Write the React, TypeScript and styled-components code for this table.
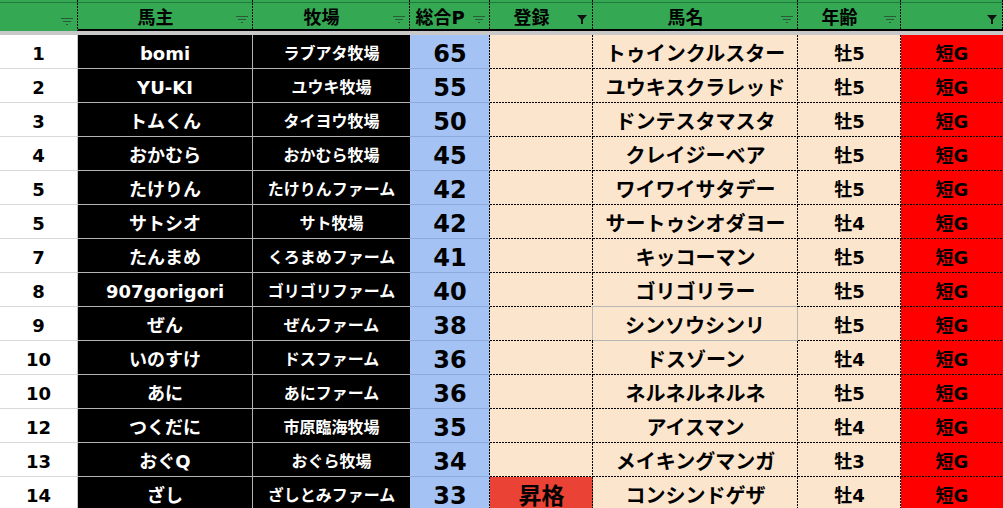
import styled, { createGlobalStyle, css } from 'styled-components'

const GlobalStyle = createGlobalStyle`
  html, body {
    margin: 0;
    padding: 0;
    background: #ffffff;
    overflow: hidden;
  }
`

type Kind = 'num' | 'owner' | 'farm' | 'point' | 'entry' | 'horse' | 'age' | 'grade'

const COLS = '78px 175px 157px 80px 103px 205px 103px 102px'

// Excel-style dotted cell lines, drawn as background layers so they read darker than css "dotted"
const DOT_X = 'linear-gradient(to right, #000 2px, transparent 2px)'
const DOT_Y = 'linear-gradient(#000 2px, transparent 2px)'

const dotted = (bottom: boolean, right: boolean) => {
  const img: string[] = []
  const size: string[] = []
  const pos: string[] = []
  const rep: string[] = []
  if (bottom) {
    img.push(DOT_X)
    size.push('3px 1px')
    pos.push('left bottom')
    rep.push('repeat-x')
  }
  if (right) {
    img.push(DOT_Y)
    size.push('1px 3px')
    pos.push('right top')
    rep.push('repeat-y')
  }
  return css`
    background-image: ${img.join(', ')};
    background-size: ${size.join(', ')};
    background-position: ${pos.join(', ')};
    background-repeat: ${rep.join(', ')};
  `
}

const Sheet = styled.div`
  display: grid;
  grid-template-columns: ${COLS};
  grid-template-rows: 31px 4px;
  grid-auto-rows: 34px;
  width: 1003px;
  font-family: "DejaVu Sans", "Noto Sans CJK JP", sans-serif;
  font-weight: 700;
`

const HeadCell = styled.div<{ $first?: boolean }>`
  position: relative;
  box-sizing: border-box;
  display: flex;
  align-items: center;
  justify-content: center;
  padding: 2px 20px 0 0;
  font-size: 18px;
  color: #000;
  background:
    ${DOT_Y} right top / 1px 3px repeat-y,
    linear-gradient(#34a853 0 2px, #1f7b3b 2px 3px, #34a853 3px);
  border-bottom: ${(p) => (p.$first ? 'none' : '2px solid #000')};
`

const Freeze = styled.div`
  grid-column: 1 / -1;
  background: #c8c8c8;
`

const Row = styled.div`
  display: contents;
`

const IconSlot = styled.span`
  position: absolute;
  right: 4px;
  bottom: 4px;
  width: 14px;
  height: 12px;
  display: flex;
`

const cellLook: Record<Kind, ReturnType<typeof css>> = {
  num: css`
    background-color: #fff;
    color: #000;
    font-size: 18px;
    border-right: 1px solid #c4c4c4;
    border-bottom: 1px solid #d9d9d9;
  `,
  owner: css`
    background-color: #000;
    color: #fff;
    font-size: 18px;
    border-right: 1px solid #b3b3b3;
    border-bottom: 1px solid #b3b3b3;
  `,
  farm: css`
    background-color: #000;
    color: #fff;
    font-size: 16px;
    border-bottom: 1px solid #b3b3b3;
  `,
  point: css`
    background-color: #a4c2f4;
    color: #000;
    font-size: 24px;
    border-bottom: 1px solid #8eaadb;
    ${dotted(false, true)}
  `,
  entry: css`
    background-color: #fce5cd;
    color: #000;
    font-size: 23px;
    ${dotted(true, true)}
  `,
  horse: css`
    background-color: #fce5cd;
    color: #000;
    font-size: 20px;
    font-weight: 600;
    ${dotted(true, true)}
  `,
  age: css`
    background-color: #fce5cd;
    color: #000;
    font-size: 18px;
    ${dotted(true, true)}
  `,
  grade: css`
    background-color: #ff0000;
    color: #000;
    font-size: 18px;
    ${dotted(true, false)}
  `,
}

const Cell = styled.div<{ $kind: Kind; $promoted?: boolean; $plain?: boolean }>`
  box-sizing: border-box;
  display: flex;
  align-items: center;
  justify-content: center;
  padding-top: 4px;
  line-height: 1;
  white-space: nowrap;
  overflow: hidden;
  ${(p) => cellLook[p.$kind]}
  ${(p) =>
    p.$promoted &&
    css`
      background-color: #ea4335;
    `}
  ${(p) =>
    p.$plain &&
    css`
      background-image: none;
      border-right: 1px solid #b7b7b7;
      border-bottom: 1px solid #b7b7b7;
      box-shadow: -1px -1px 0 0 #b7b7b7;
    `}
`

const FilterButton = () => (
  <svg width="14" height="12" viewBox="0 0 14 12">
    <rect x="1" y="3" width="12" height="1" fill="#2a5a37" />
    <rect x="3" y="6" width="8" height="1" fill="#2a5a37" />
    <rect x="6" y="9" width="2" height="1" fill="#2a5a37" />
  </svg>
)

const FunnelIcon = () => (
  <svg width="14" height="12" viewBox="0 0 14 12">
    <path d="M2 2 H12 L8 6.5 V11 H6 V6.5 Z" fill="#111" />
  </svg>
)

type Entry = {
  rank: string
  owner: string
  farm: string
  point: number
  entry?: string
  horse: string
  age: string
  plain?: boolean
}

const rows: Entry[] = [
  { rank: '1', owner: 'bomi', farm: 'ラブアタ牧場', point: 65, horse: 'トゥインクルスター', age: '牡5' },
  { rank: '2', owner: 'YU-KI', farm: 'ユウキ牧場', point: 55, horse: 'ユウキスクラレッド', age: '牡5' },
  { rank: '3', owner: 'トムくん', farm: 'タイヨウ牧場', point: 50, horse: 'ドンテスタマスタ', age: '牡5' },
  { rank: '4', owner: 'おかむら', farm: 'おかむら牧場', point: 45, horse: 'クレイジーベア', age: '牡5' },
  { rank: '5', owner: 'たけりん', farm: 'たけりんファーム', point: 42, horse: 'ワイワイサタデー', age: '牡5' },
  { rank: '5', owner: 'サトシオ', farm: 'サト牧場', point: 42, horse: 'サートゥシオダヨー', age: '牡4' },
  { rank: '7', owner: 'たんまめ', farm: 'くろまめファーム', point: 41, horse: 'キッコーマン', age: '牡5' },
  { rank: '8', owner: '907gorigori', farm: 'ゴリゴリファーム', point: 40, horse: 'ゴリゴリラー', age: '牡5' },
  { rank: '9', owner: 'ぜん', farm: 'ぜんファーム', point: 38, horse: 'シンソウシンリ', age: '牡5', plain: true },
  { rank: '10', owner: 'いのすけ', farm: 'ドスファーム', point: 36, horse: 'ドスゾーン', age: '牡4' },
  { rank: '10', owner: 'あに', farm: 'あにファーム', point: 36, horse: 'ネルネルネルネ', age: '牡5' },
  { rank: '12', owner: 'つくだに', farm: '市原臨海牧場', point: 35, horse: 'アイスマン', age: '牡4' },
  { rank: '13', owner: 'おぐQ', farm: 'おぐら牧場', point: 34, horse: 'メイキングマンガ', age: '牡3' },
  { rank: '14', owner: 'ざし', farm: 'ざしとみファーム', point: 33, entry: '昇格', horse: 'コンシンドゲザ', age: '牡4' },
]

const headers: { label: string; filtered?: boolean }[] = [
  { label: '' },
  { label: '馬主' },
  { label: '牧場' },
  { label: '総合P' },
  { label: '登録', filtered: true },
  { label: '馬名' },
  { label: '年齢' },
  { label: '', filtered: true },
]

const App = () => {
  return (
    <>
      <GlobalStyle />
      <Sheet>
        <Row>
          {headers.map((h, i) => (
            <HeadCell key={i} $first={i === 0}>
              {h.label}
              <IconSlot>{h.filtered ? <FunnelIcon /> : <FilterButton />}</IconSlot>
            </HeadCell>
          ))}
        </Row>
        <Freeze />
        {rows.map((r, i) => (
          <Row key={i}>
            <Cell $kind="num">{r.rank}</Cell>
            <Cell $kind="owner">{r.owner}</Cell>
            <Cell $kind="farm">{r.farm}</Cell>
            <Cell $kind="point">{r.point}</Cell>
            <Cell $kind="entry" $promoted={!!r.entry}>{r.entry}</Cell>
            <Cell $kind="horse" $plain={r.plain}>{r.horse}</Cell>
            <Cell $kind="age">{r.age}</Cell>
            <Cell $kind="grade">短G</Cell>
          </Row>
        ))}
      </Sheet>
    </>
  )
}

export default App
